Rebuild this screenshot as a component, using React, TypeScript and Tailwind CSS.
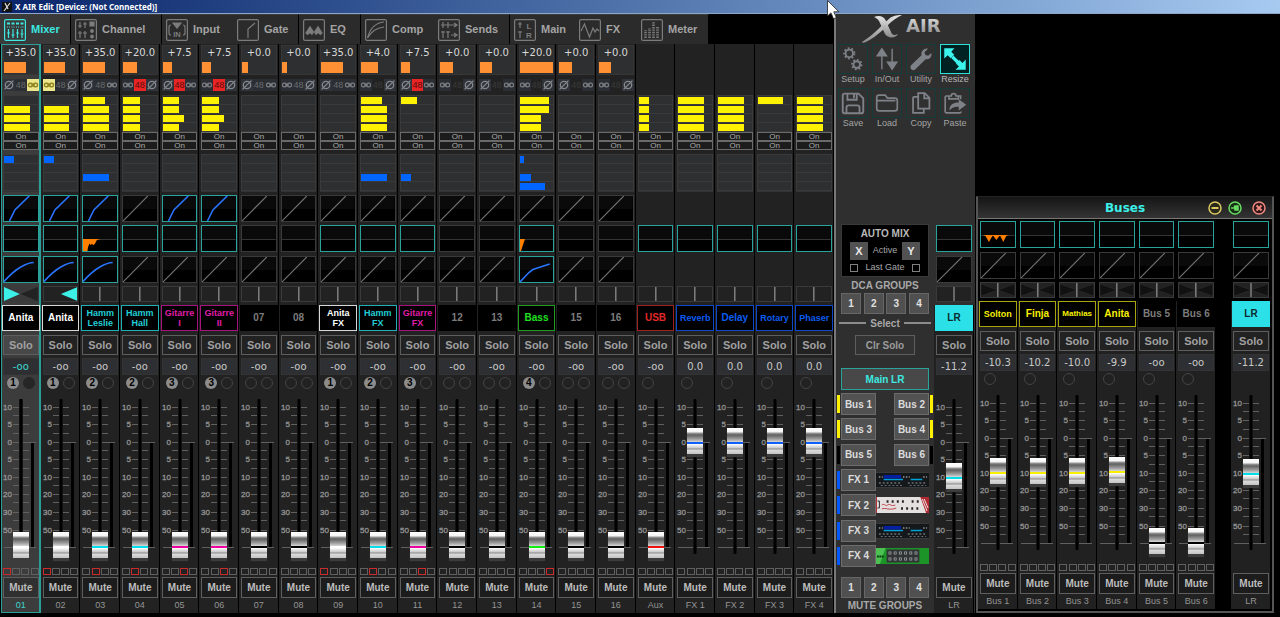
import type { ReactNode } from "react";

/* ---------- data ---------- */

type Pan = "none" | "center" | "left" | "right" | "bowtie";
type Curve = "off" | "on" | "alt";

interface Channel {
  label: string;
  name: string;
  color: keyof typeof nameStyles;
  cap: keyof typeof capStyles;
  small?: boolean;
  tiny?: boolean;
  selected?: boolean;
  gain?: string;
  gainBar?: number;
  phantom?: "red" | "gray" | "dim";
  linked?: boolean;
  flipped?: boolean;
  sends?: number[];
  fx?: number[];
  gate?: Curve;
  eq?: boolean;
  eqShape?: "low" | "edge" | "notches";
  comp?: Curve;
  pan: Pan;
  value: string;
  level: number;
  dca?: string;
  dcaSlots: number;
  muteGroup?: number;
  muteGroups?: boolean;
}

const nameStyles = {
  white: "border border-[#d8d8d8] bg-black text-white",
  cyan: "border border-[#20b0b4] bg-black text-[#22ced6]",
  magenta: "border border-[#a8127c] bg-black text-[#e01ca8]",
  gray: "bg-black text-[#7c7c7c]",
  green: "border border-[#1d9c1d] bg-black text-[#20e020]",
  red: "border border-[#a02020] bg-black text-[#e02828]",
  blue: "border border-[#0c48c8] bg-black text-[#0c5cf0]",
  yellow: "border border-[#a8a410] bg-black text-[#f8f000]",
  solid: "bg-[#2ce0e8] text-[#0c2c2e]",
};

const capStyles = {
  white: "text-white",
  cyan: "text-[#00e0ec]",
  magenta: "text-[#f000a0]",
  black: "text-black",
  green: "text-[#10f010]",
  red: "text-[#f01010]",
  blue: "text-[#1060ff]",
  yellow: "text-[#f8f000]",
};

const idle = { pan: "center" as Pan, value: "-oo", level: 0, dcaSlots: 2 };
const none4 = [0, 0, 0, 0];

const channels: Channel[] = [
  { ...idle, label: "01", name: "Anita", color: "white", cap: "white", selected: true, gain: "+35.0", gainBar: 64, phantom: "gray", linked: true, sends: [0, 76, 76, 76], fx: [30, 0, 0, 0], gate: "on", eq: true, comp: "on", pan: "left", dca: "1", muteGroup: 0 },
  { ...idle, label: "02", name: "Anita", color: "white", cap: "white", gain: "+35.0", gainBar: 64, phantom: "gray", linked: true, flipped: true, sends: [0, 76, 76, 76], fx: [30, 0, 0, 0], gate: "on", eq: true, comp: "on", pan: "right", dca: "1", muteGroup: 0 },
  { ...idle, label: "03", name: "Hamm\nLeslie", small: true, color: "cyan", cap: "cyan", gain: "+35.0", gainBar: 64, phantom: "gray", sends: [63, 76, 76, 76], fx: [0, 0, 76, 0], gate: "on", eq: true, eqShape: "low", comp: "on", dca: "2", muteGroup: 1 },
  { ...idle, label: "04", name: "Hamm\nHall", small: true, color: "cyan", cap: "cyan", gain: "+20.0", gainBar: 43, phantom: "red", flipped: true, sends: [50, 50, 50, 50], fx: none4, gate: "off", eq: true, comp: "off", dca: "2", muteGroup: 1 },
  { ...idle, label: "05", name: "Gitarre\nI", small: true, color: "magenta", cap: "magenta", gain: "+7.5", gainBar: 27, phantom: "red", sends: [50, 50, 63, 50], fx: none4, gate: "on", eq: true, comp: "off", dca: "3", muteGroup: 2 },
  { ...idle, label: "06", name: "Gitarre\nII", small: true, color: "magenta", cap: "magenta", gain: "+7.5", gainBar: 27, phantom: "red", flipped: true, sends: [50, 50, 63, 50], fx: none4, gate: "on", eq: true, comp: "off", dca: "3", muteGroup: 2 },
  { ...idle, label: "07", name: "07", color: "gray", cap: "black", gain: "+0.0", gainBar: 17, phantom: "gray", sends: none4, fx: none4, gate: "off", comp: "off" },
  { ...idle, label: "08", name: "08", color: "gray", cap: "black", gain: "+0.0", gainBar: 17, phantom: "gray", flipped: true, sends: none4, fx: none4, gate: "off", comp: "off" },
  { ...idle, label: "09", name: "Anita\nFX", small: true, color: "white", cap: "white", gain: "+35.0", gainBar: 64, phantom: "gray", sends: none4, fx: none4, gate: "off", eq: true, comp: "off", dca: "1", muteGroup: 0 },
  { ...idle, label: "10", name: "Hamm\nFX", small: true, color: "cyan", cap: "cyan", gain: "+4.0", gainBar: 50, phantom: "dim", flipped: true, sends: [63, 76, 76, 76], fx: [0, 0, 76, 0], gate: "off", eq: true, comp: "off", dca: "2", muteGroup: 1 },
  { ...idle, label: "11", name: "Gitarre\nFX", small: true, color: "magenta", cap: "magenta", gain: "+7.5", gainBar: 27, phantom: "red", sends: [50, 0, 0, 0], fx: [0, 0, 31, 0], gate: "off", eq: true, comp: "off", dca: "3", muteGroup: 2 },
  { ...idle, label: "12", name: "12", color: "gray", cap: "black", gain: "+0.0", gainBar: 37, phantom: "dim", flipped: true, sends: none4, fx: none4, gate: "off", comp: "off" },
  { ...idle, label: "13", name: "13", color: "gray", cap: "black", gain: "+0.0", gainBar: 37, phantom: "dim", sends: none4, fx: none4, gate: "off", comp: "off" },
  { ...idle, label: "14", name: "Bass", color: "green", cap: "green", gain: "+20.0", gainBar: 100, phantom: "dim", flipped: true, sends: [88, 88, 63, 63], fx: [13, 0, 35, 75], gate: "off", eq: true, eqShape: "edge", comp: "alt", dca: "4", muteGroup: 3 },
  { ...idle, label: "15", name: "15", color: "gray", cap: "black", gain: "+0.0", gainBar: 37, phantom: "dim", sends: none4, fx: none4, gate: "off", comp: "off" },
  { ...idle, label: "16", name: "16", color: "gray", cap: "black", gain: "+0.0", gainBar: 37, phantom: "dim", flipped: true, sends: none4, fx: none4, gate: "off", comp: "off" },
  { ...idle, label: "Aux", name: "USB", color: "red", cap: "red", sends: [32, 32, 32, 32], fx: none4, eq: true, dcaSlots: 1 },
  { ...idle, label: "FX 1", name: "Reverb", small: true, color: "blue", cap: "blue", sends: [76, 76, 76, 76], fx: none4, eq: true, value: "0.0", level: 74, dcaSlots: 1 },
  { ...idle, label: "FX 2", name: "Delay", color: "blue", cap: "blue", sends: [76, 76, 76, 76], fx: none4, eq: true, value: "0.0", level: 74, dcaSlots: 1 },
  { ...idle, label: "FX 3", name: "Rotary", small: true, color: "blue", cap: "blue", sends: [76, 0, 0, 0], fx: none4, eq: true, value: "0.0", level: 74, dcaSlots: 1 },
  { ...idle, label: "FX 4", name: "Phaser", small: true, color: "blue", cap: "blue", sends: [76, 76, 76, 76], fx: none4, eq: true, value: "0.0", level: 74, dcaSlots: 1 },
];

const busBase = { pan: "bowtie" as Pan, comp: "off" as Curve, eq: true, dcaSlots: 1 };

const buses: Channel[] = [
  { ...busBase, label: "Bus 1", name: "Solton", small: true, color: "yellow", cap: "yellow", eqShape: "notches", value: "-10.3", level: 50 },
  { ...busBase, label: "Bus 2", name: "Finja", color: "yellow", cap: "yellow", value: "-10.2", level: 50 },
  { ...busBase, label: "Bus 3", name: "Mathias", tiny: true, color: "yellow", cap: "yellow", value: "-10.0", level: 50 },
  { ...busBase, label: "Bus 4", name: "Anita", color: "yellow", cap: "yellow", value: "-9.9", level: 51 },
  { ...busBase, label: "Bus 5", name: "Bus 5", color: "gray", cap: "black", value: "-oo", level: 0 },
  { ...busBase, label: "Bus 6", name: "Bus 6", color: "gray", cap: "black", value: "-oo", level: 0 },
];

const mainLR: Channel = { label: "LR", name: "LR", color: "solid", cap: "cyan", eq: true, comp: "off", pan: "center", value: "-11.2", level: 49, dcaSlots: 0, muteGroups: false };

/* ---------- strip parts ---------- */

function BarStack({ values, tone, label }: { values: number[]; tone: "yellow" | "blue"; label: string }) {
  return (
    <div aria-label={label} role="group" className="border-t border-[#3a3a3a] bg-[#2d2f31]">
      {values.map((v, i) => (
        <div key={i} className="h-[9px] border-x border-b border-[#3a3a3a] pt-px">
          <div className={tone === "yellow" ? "h-[7px] bg-[#fff200]" : "h-[7px] bg-[#0066ff]"} style={{ width: `${v}%` }} />
        </div>
      ))}
    </div>
  );
}

function OnButton() {
  return (
    <button className="flex h-[9px] w-full items-center justify-center border border-[#6a6a6a] bg-[#1c1c1c] text-[8px] leading-[8px] text-[#acacac]">
      On
    </button>
  );
}

function PhaseIcon() {
  return (
    <svg viewBox="0 0 12 12" className="size-3" fill="none" stroke="#868a8e" strokeWidth="1.3">
      <circle cx="6" cy="6" r="3.7" />
      <path d="M1.6 10.4 10.4 1.6" />
    </svg>
  );
}

function LinkIcon({ on }: { on?: boolean }) {
  return (
    <svg viewBox="0 0 12 12" className="size-3" fill="none" stroke={on ? "#8f8420" : "#7c8084"} strokeWidth={on ? 1.4 : 1.2}>
      <rect x="1.5" y="4.2" width="4" height="3.6" rx="1.6" />
      <rect x="6.5" y="4.2" width="4" height="3.6" rx="1.6" />
      <path d="M4 6h4" />
    </svg>
  );
}

const phantomStyles = {
  red: "bg-[#e82424] text-[#5c0c0c]",
  gray: "bg-[#2b2e32] text-[#686c70]",
  dim: "text-[#3a3a3a]",
};

function InputFlags({ ch }: { ch: Channel }) {
  return (
    <div className={`flex h-[13px] items-center justify-between ${ch.flipped ? "flex-row-reverse" : ""}`}>
      <button aria-label="Polarity" className="flex h-3 w-3 items-center justify-center bg-[#30343a]">
        <PhaseIcon />
      </button>
      <button className={`h-3 w-3 text-center text-[9px] leading-3 ${phantomStyles[ch.phantom ?? "dim"]}`}>48</button>
      <button aria-label="Link" className={`flex h-3 w-3 items-center justify-center ${ch.linked ? "bg-[#ece68c]" : "bg-[#2b2e34]"}`}>
        <LinkIcon on={ch.linked} />
      </button>
    </div>
  );
}

function GraphBox({ active, children }: { active?: boolean; children: ReactNode }) {
  return (
    <div className={`h-[27px] border bg-black ${active ? "border-[#2ba39d]" : "border-[#3a3a3a]"}`}>
      <svg viewBox="0 0 34 25" preserveAspectRatio="none" className="block h-full w-full" fill="none">
        <rect width="34" height="13" fill="#0a0a0a" />
        {children}
      </svg>
    </div>
  );
}

function DynamicsBox({ kind, curve }: { kind: "gate" | "comp"; curve: Curve }) {
  const diagonal = <path d="M0 25 25 0" stroke="#747474" strokeWidth="1.1" />;
  const paths = {
    gate: "M5.5 25 11 14 25.500 0",
    comp: "M0 24.500Q9 14.500 17 10T30 5.500",
  };
  return (
    <GraphBox active={curve !== "off"}>
      {curve === "off" ? diagonal : (
        <path d={curve === "alt" ? "M0 25 9 15.500 13 12.500 30 7" : paths[kind]} stroke="#2a74ff" strokeWidth="1.6" />
      )}
    </GraphBox>
  );
}

function EqBox({ active, shape }: { active?: boolean; shape?: Channel["eqShape"] }) {
  return (
    <GraphBox active={active}>
      <path d="M0 13.500H34" stroke="#343434" />
      {shape === "low" && <path d="M0 13h18l-4 1-2 4-1.500 1-1.500-1-1.500 1-1-1.500-1.500 4-.5 3.500H0Z" fill="#ff7f00" />}
      {shape === "edge" && <path d="M0 13h5L1 25H0Z" fill="#ff7f00" />}
      {shape === "notches" && <path d="M2 13h26l-2.500 1-3 6-3-6h-1l-3 4-3-4h-1l-3.500 6-3.500-6Z" fill="#ff7f00" />}
    </GraphBox>
  );
}

function PanBox({ pan }: { pan: Pan }) {
  return (
    <div className="h-4 border border-[#3a3a3a] bg-[#222]">
      <svg viewBox="0 0 34 14" preserveAspectRatio="none" className="block h-full w-full">
        {pan === "bowtie" && <path d="M0 1 17 7 0 13ZM34 1 17 7 34 13Z" fill="#111" stroke="#333" strokeWidth=".5" />}
        {(pan === "center" || pan === "bowtie") && <path d="M17 0V14" stroke="#969696" strokeWidth="1.2" />}
        {pan === "left" && (
          <>
            <rect width="34" height="14" fill="#3a3a3a" />
            <path d="M34 0V14L17 7Z" fill="#222" />
            <path d="M0 0 16 7 0 14Z" fill="#3cf0e8" />
          </>
        )}
        {pan === "right" && <path d="M34 0V14L17 7Z" fill="#3cf0e8" />}
      </svg>
    </div>
  );
}

const ticks: [number, string][] = [
  [18, "10"], [26, ""], [35, "5"], [44, ""], [53, "0"], [61, ""], [70, "5"], [79, ""], [88, "10"],
  [96, ""], [105, "20"], [113, ""], [123, "30"], [131, ""], [141, "50"], [149, ""],
];

function Fader({ ch }: { ch: Channel }) {
  return (
    <div className="-mx-px grid h-[179px] justify-items-center overflow-hidden">
      <svg viewBox="0 0 38 179" className="col-start-1 row-start-1 h-[179px] w-[38px]">
        <rect x="29" y="53" width="3" height="105" fill="#000" />
        {ticks.map(([y, text]) => (
          <g key={y}>
            <path d={`M11 ${y + 0.5}h7M21 ${y + 0.5}h6`} stroke="#606060" />
            {text && (
              <text x="10" y={y + 3} textAnchor="end" fontSize="8" fill="#949494" stroke="#949494" strokeWidth=".3">
                {text}
              </text>
            )}
          </g>
        ))}
        <path d="M27 53.500H34M2 158.500H34" stroke="#606060" />
        <rect x="17" y="10" width="4" height="155" fill="#1f2423" />
        <rect x="17.500" y="10" width="3" height="155" rx="1" fill="#000" />
      </svg>
      <input
        type="range"
        aria-label={`${ch.label} level`}
        defaultValue={ch.level}
        className={`col-start-1 row-start-1 mt-[3px] h-[166px] w-4 appearance-none bg-transparent [direction:rtl] [writing-mode:vertical-lr] [&::-webkit-slider-runnable-track]:w-4 [&::-webkit-slider-thumb]:h-[26px] [&::-webkit-slider-thumb]:w-4 [&::-webkit-slider-thumb]:appearance-none [&::-webkit-slider-thumb]:bg-[linear-gradient(180deg,#fff_0,#f4f4f4_4px,#9a9a9a_5px,#606060_7px,#9c9c9c_11px,#d8d8d8_14px,currentColor_14px,currentColor_16px,#fff_16px,#c8c8c8_20px,#8a8a8a_21px,#dcdcdc_22px,#c4c4c4_26px)] [&::-webkit-slider-thumb]:shadow-[0_3px_1px_#3c3c3c] ${capStyles[ch.cap]}`}
      />
    </div>
  );
}

function DcaDots({ ch }: { ch: Channel }) {
  return (
    <div className="flex h-3 gap-1 pl-1">
      {Array.from({ length: ch.dcaSlots }, (_, i) =>
        i === 0 && ch.dca ? (
          <span key={i} className="size-3 rounded-full bg-[#8c8c8c] text-center text-[10px] leading-3 font-bold text-black">
            {ch.dca}
          </span>
        ) : (
          <span key={i} className={`size-3 rounded-full border ${ch.selected ? "border-[#262626] bg-[#262626]" : "border-[#444]"}`} />
        ),
      )}
    </div>
  );
}

function StripFoot({ ch }: { ch: Channel }) {
  const size = ch.tiny ? "text-[8px]" : ch.small ? "text-[9px]" : "text-[10px]";
  return (
    <>
      <button className={`-mx-px flex h-[26px] items-center justify-center text-center leading-[10px] font-bold whitespace-pre ${size} ${nameStyles[ch.color]}`}>
        {ch.name}
      </button>
      <button className={`mt-1 h-5 w-full border border-[#5e5e5e] text-[11px] leading-[18px] font-bold text-[#a0a0a0] ${ch.selected ? "bg-[#484848]" : "bg-[#222]"}`}>
        Solo
      </button>
      <output className={`mt-[3px] block h-[17px] border border-[#333] bg-[#2d2f32] text-center font-['DejaVu_Sans',sans-serif] text-[10px] leading-[15px] ${ch.selected ? "text-[#3cd8d0]" : "text-[#c8c8c8]"}`}>
        {ch.value}
      </output>
      <div className="mt-0.5 h-3">
        <DcaDots ch={ch} />
      </div>
      <Fader ch={ch} />
      <div className="flex h-[7px] justify-between">
        {ch.muteGroups !== false &&
          [0, 1, 2, 3].map((i) => (
            <span key={i} className={`h-[7px] w-2 border ${ch.muteGroup === i ? "border-[#c82c2c]" : "border-[#606060]"}`} />
          ))}
      </div>
      <button className={`mt-0.5 h-[21px] w-full border border-[#5e5e5e] text-[10px] leading-[19px] font-bold text-[#bcbcbc] ${ch.selected ? "bg-[#303030]" : "bg-[#1c1c1c]"}`}>
        Mute
      </button>
      <div className={`h-[15px] text-center text-[9px] leading-[15px] whitespace-nowrap ${ch.selected ? "text-[#3cd8d0]" : "text-[#949494]"}`}>
        {ch.label}
      </div>
    </>
  );
}

function ChannelStrip({ ch }: { ch: Channel }) {
  const frame = ch.selected
    ? "bg-[#3c3c3c] shadow-[inset_0_0_0_1px_#2a9d97] border-r border-[#2a9d97]"
    : "bg-[#222] border-r border-black";
  return (
    <section aria-label={ch.label} className={`min-w-0 pt-px pr-px pl-0.5 ${frame}`}>
      <div className="h-[30px]">
        {ch.gain && (
          <div className="h-full border border-[#363636] bg-[#2d2f31]">
            <div className="h-4 text-center font-['DejaVu_Sans',sans-serif] text-[10px] leading-[14px] text-[#d8d8d8]">{ch.gain}</div>
            <div className="h-[11px] bg-[#ff9034]" style={{ width: `${ch.gainBar}%` }} />
          </div>
        )}
      </div>
      <div className="mt-[3px] h-[13px]">{ch.gain && <InputFlags ch={ch} />}</div>
      <div className="mt-1">
        <BarStack values={ch.sends ?? none4} tone="yellow" label="Bus sends" />
      </div>
      <OnButton />
      <OnButton />
      <div className="mt-1 border-b border-[#333]">
        <BarStack values={ch.fx ?? none4} tone="blue" label="FX sends" />
      </div>
      <div className="mt-[3px] h-[27px]">{ch.gate && <DynamicsBox kind="gate" curve={ch.gate} />}</div>
      <div className="mt-[3px]">
        <EqBox active={ch.eq} shape={ch.eqShape} />
      </div>
      <div className="mt-1 h-[27px]">{ch.comp && <DynamicsBox kind="comp" curve={ch.comp} />}</div>
      <div className="my-[3px]">
        <PanBox pan={ch.pan} />
      </div>
      <div className="flex flex-col">
        <StripFoot ch={ch} />
      </div>
    </section>
  );
}

function OutputStrip({ ch }: { ch: Channel }) {
  return (
    <section aria-label={ch.label} className="min-w-0">
      <div className="flex flex-col pr-0.5 pb-[3px] pl-0.5">
        <EqBox active shape={ch.eqShape} />
        <div className="mt-1 mb-[3px]">
          <DynamicsBox kind="comp" curve="off" />
        </div>
        <PanBox pan={ch.pan} />
      </div>
      <div className="flex flex-col border-r border-black bg-[#212121] pr-px pl-0.5">
        <StripFoot ch={ch} />
      </div>
    </section>
  );
}

/* ---------- top bar ---------- */

function TabIcon({ children }: { children: ReactNode }) {
  return (
    <svg viewBox="0 0 22 22" className="size-[22px] shrink-0" fill="none" stroke="currentColor" strokeWidth="1.2">
      <rect x=".6" y=".6" width="20.800" height="20.800" rx="1.5" />
      {children}
    </svg>
  );
}

const tabs: { label: string; width: string; icon: ReactNode; active?: boolean }[] = [
  {
    label: "Mixer", width: "w-[71px] border-r border-black", active: true,
    icon: (
      <>
        <path d="M3 4.500h3M7.500 4.500h3M12 4.500h3M16.500 4.500h3" strokeWidth="2" />
        <path d="M3 8h3M7.500 8h3M12 8h3M16.500 8h3" strokeDasharray="1 1" />
        <path d="M4.500 10v9M9 10v9M13.500 10v9M18 10v9M3 14h3M7.500 16h3M12 14h3M16.500 15h3" />
      </>
    ),
  },
  {
    label: "Channel", width: "w-[91px] border-r border-black",
    icon: (
      <>
        <path d="M5 3v6M10 3v6M5 12v7M10 12v7M3 7h4M8 5h4M3 14h4M8 14h4" />
        <path d="M15 3h4v4h-4z" fill="currentColor" />
        <circle cx="17" cy="12" r="1.3" fill="currentColor" /><circle cx="17" cy="17.500" r="1.300" fill="currentColor" />
      </>
    ),
  },
  {
    label: "Input", width: "w-[71px]",
    icon: (
      <>
        <path d="M7 4h8l-4 5z" fill="currentColor" />
        <path d="M5 6q-2 0-2 2v6q0 2 2 2M17 6q2 0 2 2v6q0 2-2 2" />
        <text x="11" y="18" textAnchor="middle" fontSize="7.500" fill="currentColor" stroke="none">IN</text>
      </>
    ),
  },
  { label: "Gate", width: "w-[66px] border-r border-black", icon: <path d="M11 19v-9l7-6" /> },
  {
    label: "EQ", width: "w-[62px] border-r border-black",
    icon: <path d="M2.500 14 7 7l4 6 4-6 4.500 7-2 2-2.500-2-2 2-2-3-2 3-2-2-2.500 2Z" fill="currentColor" strokeWidth=".4" />,
  },
  { label: "Comp", width: "w-[73px]", icon: <path d="M2.500 19C5 9 10 4 19 3M2.500 19C7 12 11 9 19 8" /> },
  {
    label: "Sends", width: "w-[76px] border-r border-black",
    icon: <path d="M5 3v6M10 3v6M3 6h15M16 4l3 2-3 2M5 12v7M10 12v7M3 13h4M8 13h4M13 16h5M16 14l3 2-3 2" />,
  },
  {
    label: "Main", width: "w-[65px]",
    icon: (
      <>
        <path d="M6 3v6M6 12v7M4 5h4M4 13h4" />
        <text x="15" y="9.500" textAnchor="middle" fontSize="8" fill="currentColor" stroke="none">L</text>
        <text x="15" y="19" textAnchor="middle" fontSize="8" fill="currentColor" stroke="none">R</text>
      </>
    ),
  },
  { label: "FX", width: "w-[62px]", icon: <path d="M2 12 5.500 5l5 13 3.500-9 2 4 2-3 2 2" /> },
  {
    label: "Meter", width: "w-[72px] border-r border-black",
    icon: <path d="M4.500 19V11M8.500 19V9M12.500 19V3M16.500 19V7" strokeWidth="2.600" strokeDasharray="1.400 1" />,
  },
];

function TitleBar() {
  return (
    <header className="flex h-[14px] items-center gap-[3px] border-b border-[#8ea6c8] bg-linear-to-r from-[#0a246a] to-[#a6caf0] pl-0.5">
      <svg viewBox="0 0 10 10" className="size-[10px]">
        <rect width="10" height="10" fill="#111" />
        <path d="M2 9 8 1M3 1l3 6" stroke="#e0e0e0" strokeWidth="1.2" />
      </svg>
      <h1 className="font-['Noto_Sans',sans-serif] text-[8px] leading-3 font-bold text-white">X AIR Edit [Device: (Not Connected)]</h1>
    </header>
  );
}

function Tabs() {
  return (
    <nav className="flex h-[30px]">
      {tabs.map((t) => (
        <button
          key={t.label}
          className={`flex items-center gap-[5px] border-t border-t-[#3c3c3c] pl-1 text-[11px] font-bold ${t.width} ${t.active ? "bg-[#3a3a3a] text-[#3ce8e0]" : "bg-[#2b2b2b] text-[#a4a4a4] [&>svg]:text-[#7c7c7c]"}`}
        >
          <TabIcon>{t.icon}</TabIcon>
          {t.label}
        </button>
      ))}
    </nav>
  );
}

/* ---------- side panel ---------- */

function Logo() {
  return (
    <svg viewBox="0 0 139 30" className="h-[30px] w-full" aria-label="X AIR">
      <defs>
        <linearGradient id="metal" x1="0" y1="0" x2="0" y2="1">
          <stop offset="0" stopColor="#e4e4e4" />
          <stop offset="1" stopColor="#8a8a8a" />
        </linearGradient>
      </defs>
      <path d="M26 28C36 22 44 13 54 4c3-2 6-3 12-3-6 3-10 6-15 11C42 21 34 26 30 28c-2 1-4 1-4 0Z" fill="url(#metal)" />
      <path d="M38 3c5-2 10-1 12 4l5 11c1 3 3 4 7 2-2 4-10 5-13 0l-6-13c-1-2-3-3-5-4Z" fill="url(#metal)" />
      <text x="70" y="18" fontFamily="'DejaVu Sans', sans-serif" fontSize="18" fontWeight="bold" fill="url(#metal)">AIR</text>
    </svg>
  );
}

function Gear({ cx, cy, r }: { cx: number; cy: number; r: number }) {
  return (
    <g fill="none" stroke="currentColor">
      <circle cx={cx} cy={cy} r={r} strokeWidth="2" />
      <circle cx={cx} cy={cy} r={r + 1.6} strokeWidth="1.8" strokeDasharray="1.900 2.100" />
    </g>
  );
}

const tools: { label: string; icon: ReactNode; active?: boolean }[] = [
  { label: "Setup", icon: <><Gear cx={11} cy={9} r={4} /><Gear cx={19} cy={21} r={3.6} /></> },
  { label: "In/Out", icon: <path d="M9.500 26V10M20.500 4v16M4.500 11.500 9.500 4l5 7.500ZM15.500 18.500h10l-5 7.500Z" fill="currentColor" stroke="currentColor" strokeWidth="1.500" /> },
  {
    label: "Utility",
    icon: (
      <path d="M26 8.500c1 4-2 7.500-6 6.800L9 26c-1.500 1.500-3.500 1.200-4.500 0s-1.300-3 .2-4.500L15.500 11c-.7-4.500 3-8 7-7l-3.800 3.800 1 3 3 .8z" fill="currentColor" />
    ),
  },
  { label: "Resize", active: true, icon: <path d="M3.500 3.500h11L11 7.200l3.200 3.200-3.800 3.800L7.200 11l-3.700 3.500ZM26.500 26.500h-11l3.700-3.500-3.200-3.200 3.800-3.800 3.200 3.200 3.500-3.700ZM13.500 11.500l5.500 5.500-2.500 2.500-5.500-5.500Z" fill="currentColor" /> },
  {
    label: "Save",
    icon: <path d="M4 7q0-2 2-2h15l5 5v14q0 2-2 2H6q-2 0-2-2zM9 5v6.500h10V5M16 6v4M8 26v-6q0-2.500 2.500-2.500h9Q22 17.500 22 20v6" fill="none" stroke="currentColor" strokeWidth="2" />,
  },
  {
    label: "Load",
    icon: <path d="M4 9q0-2.500 2.500-2.500H13l2.500 3.200h8Q26 9.700 26 12.200V21q0 2.500-2.500 2.500h-17Q4 23.500 4 21zM4 12.500h20" fill="none" stroke="currentColor" strokeWidth="1.800" />,
  },
  {
    label: "Copy",
    icon: <path d="M12 4.500h7l5 5v11.500H12zM18.500 5v5H24M12 8.500H7.500q-1 0-1 1v16H18V21" fill="none" stroke="currentColor" strokeWidth="1.900" />,
  },
  {
    label: "Paste",
    icon: (
      <>
        <path d="M9 7.500H6q-1.500 0-1.500 1.500v15q0 1.500 1.500 1.500h14q1.500 0 1.500-1.500M17 7.500h4V11M8.500 10.500v-3h2.500a2.500 2.500 0 0 1 5 0h2.500v3z" fill="none" stroke="currentColor" strokeWidth="1.800" />
        <path d="M9 23c0-6 4-8.500 10-8.500V11l8 6-8 6v-4c-4 0-7 .5-10 4Z" fill="currentColor" />
      </>
    ),
  },
];

function ToolGrid() {
  return (
    <div className="ml-0.5 grid grid-cols-[repeat(4,30px)] gap-x-1 gap-y-1">
      {tools.map((t) => (
        <button key={t.label} className="flex flex-col items-center">
          <svg
            viewBox="0 0 30 30"
            className={`size-[30px] border ${t.active ? "border-[#2ce0d8] bg-[#002222] text-[#3cf4ec]" : "border-[#143c3a] bg-[#303030] text-[#7e8288]"}`}
          >
            {t.icon}
          </svg>
          <span className={`h-[10px] text-[9px] leading-[10px] ${t.active ? "text-[#b8b8b8]" : "text-[#a4a4a4]"}`}>{t.label}</span>
        </button>
      ))}
    </div>
  );
}

function AutoMix() {
  return (
    <fieldset className="flex h-[53px] flex-col border border-[#3a3a3a] bg-black text-[#a8a8a8]">
      <div className="h-[17px] text-center text-[10px] leading-[17px] font-bold text-[#b8b8b8]">AUTO MIX</div>
      <div className="flex h-[18px] items-center justify-between px-2 text-[9px]">
        <button className="size-[18px] bg-[#525252] text-[11px] font-bold text-[#e8e8e8]">X</button>
        Active
        <button className="size-[18px] bg-[#525252] text-[11px] font-bold text-[#e8e8e8]">Y</button>
      </div>
      <div className="flex h-4 items-center justify-between px-2 text-[9px]">
        <input type="checkbox" aria-label="Last Gate X" className="size-2 appearance-none border border-[#808080]" />
        Last Gate
        <input type="checkbox" aria-label="Last Gate Y" className="size-2 appearance-none border border-[#808080]" />
      </div>
    </fieldset>
  );
}

function GroupButtons() {
  return (
    <div className="flex h-[21px] justify-between">
      {["1", "2", "3", "4"].map((n) => (
        <button key={n} className="w-5 border border-[#666] bg-[#505050] text-[10px] font-bold text-[#e0e0e0]">
          {n}
        </button>
      ))}
    </div>
  );
}

function DelayRack() {
  return (
    <svg viewBox="0 0 55 16" className="block h-4 w-full" preserveAspectRatio="none">
      <rect width="55" height="16" fill="#15181b" />
      <path d="M0 .5H55M0 15.500H55" stroke="#3a3a3a" />
      <path d="M8 7.500H28M36 7.500H48" stroke="#00a0d8" strokeWidth="1.500" />
      <rect x="8" y="3" width="18" height="3.500" fill="#0420a0" />
      <path d="M3 5h4M28 5h7M49 5h4" stroke="#777" strokeDasharray="1.500 1.500" strokeWidth="2" />
      <path d="M3 11H27M33 11H52" stroke="#6c7074" strokeDasharray="2 2" strokeWidth="1.500" />
      <path d="M5 13.500H27M35 13.500H52" stroke="#6c7074" strokeDasharray="2 2" />
    </svg>
  );
}

function RedRack() {
  return (
    <svg viewBox="0 0 55 16" className="block h-4 w-full" preserveAspectRatio="none">
      <rect width="55" height="16" fill="#e4e0e0" />
      <path d="M46 0h9v16h-3ZM0 0h1v16H0z" fill="#b02830" />
      <path d="M48 2l5 12M50 2l4 9" stroke="#f0e8e8" />
      <path d="M1.500 4h2v7h-2" fill="none" stroke="#222" />
      <path d="M11 4.500H29M37 4.500H45M26 11.500H45" stroke="#2a2222" strokeDasharray="2 3.300" strokeWidth="2.500" />
      <path d="M6 8c3-2 4 2 6 0s4 2 8 0M6 12c3-2 8 2 15-1" stroke="#c04048" fill="none" />
    </svg>
  );
}

function GreenRack() {
  return (
    <svg viewBox="0 0 55 16" className="block h-4 w-full" preserveAspectRatio="none">
      <rect width="55" height="16" fill="#1c9428" />
      <path d="M0 0 10 0 4 16H0Z" fill="#4cc050" />
      <path d="M1 8.500h7" stroke="#0c4010" strokeWidth="2" strokeDasharray="2 .5" />
      <rect x="11" y="1.500" width="34" height="13" fill="#303434" />
      <path d="M13 5H44M13 11H44" stroke="#989c9c" strokeDasharray="3 2.400" strokeWidth="3" />
      <path d="M14 5H44M14 11H44" stroke="#181818" strokeDasharray="1 4.400" strokeWidth="1.500" />
    </svg>
  );
}

const busRows = [
  { left: "Bus 1", right: "Bus 2", on: true },
  { left: "Bus 3", right: "Bus 4", on: true },
  { left: "Bus 5", right: "Bus 6", on: false },
];

const fxRows = [
  { label: "FX 1", rack: <DelayRack /> },
  { label: "FX 2", rack: <RedRack /> },
  { label: "FX 3", rack: <DelayRack /> },
  { label: "FX 4", rack: <GreenRack /> },
];

const layerButton = "h-[22px] w-[35px] shrink-0 border border-[#6c6c6c] bg-[#525252] text-[10px] font-bold text-[#dcdcdc]";

function LayerButtons() {
  return (
    <div className="-mx-1 flex h-[174px] flex-col justify-between">
      {busRows.map((r) => (
        <div key={r.left} className="flex items-center">
          <span className={`mr-px h-[18px] w-[3px] ${r.on ? "bg-[#fff200]" : "bg-black"}`} />
          <button className={layerButton}>{r.left}</button>
          <span className="flex-1" />
          <button className={layerButton}>{r.right}</button>
          <span className={`ml-px h-[18px] w-[3px] ${r.on ? "bg-[#fff200]" : "bg-black"}`} />
        </div>
      ))}
      {fxRows.map((r) => (
        <div key={r.label} className="flex items-center pr-1">
          <span className="mr-px h-[18px] w-[3px] bg-[#0058ff]" />
          <button className={layerButton}>{r.label}</button>
          <div className="min-w-0 flex-1">{r.rack}</div>
        </div>
      ))}
    </div>
  );
}

function SidePanel() {
  return (
    <aside className="flex w-[141px] shrink-0 flex-col border-l-2 border-[#787878] bg-[#2f2f2f]">
      <Logo />
      <ToolGrid />
      <div className="mt-auto flex">
        <div className="flex min-w-0 flex-1 flex-col px-[5px]">
          <AutoMix />
          <div className="-mx-1 h-4 text-center text-[10px] leading-[18px] font-bold text-[#a8a8a8]">DCA GROUPS</div>
          <GroupButtons />
          <div className="-mx-0.5 flex h-[18px] items-center gap-1 text-[10px] font-bold text-[#a8a8a8]">
            <span className="h-0.5 flex-1 bg-[#8c8c8c]" />
            Select
            <span className="h-0.5 flex-1 bg-[#8c8c8c]" />
          </div>
          <button className="mx-auto mt-[3px] h-5 w-[60px] border border-[#5e5e5e] bg-[#333] text-[10px] font-bold text-[#9c9c9c]">Clr Solo</button>
          <button className="mt-[13px] mb-[3px] h-[22px] border border-[#2ba39d] bg-[#484848] text-[10px] font-bold text-[#3ce8e0]">Main LR</button>
          <LayerButtons />
          <div className="mt-[10px]">
            <GroupButtons />
          </div>
          <div className="-mx-1 h-[15px] text-center text-[10px] leading-[15px] font-bold whitespace-nowrap text-[#a8a8a8]">MUTE GROUPS</div>
        </div>
        <div className="mr-px w-10 shrink-0 pt-px">
          <OutputStrip ch={mainLR} />
        </div>
      </div>
    </aside>
  );
}

/* ---------- buses window ---------- */

function BusesWindow() {
  return (
    <section aria-label="Buses" className="mr-[6px] ml-px border-2 border-t border-[#555] border-t-[#242424] bg-black">
      <div className="flex h-[22px] items-center border-b border-[#777] bg-linear-to-b from-[#161616] to-[#343434]">
        <span className="w-[76px]" />
        <h2 className="flex-1 text-center font-['DejaVu_Sans',sans-serif] text-[12px] font-bold text-[#3cf0e8]">Buses</h2>
        <div className="flex w-[76px] items-center gap-[6px] pl-3">
          <button aria-label="Minimize">
            <svg viewBox="0 0 14 14" className="size-[14px]" fill="#2a2818" stroke="#dcc860" strokeWidth="1.500">
              <circle cx="7" cy="7" r="6" />
              <path d="M3.500 7h7" strokeWidth="2" />
            </svg>
          </button>
          <button aria-label="Pin">
            <svg viewBox="0 0 14 14" className="size-[14px]" fill="#182a18" stroke="#68dc60" strokeWidth="1.500">
              <circle cx="7" cy="7" r="6" />
              <path d="M3 7h3M6.500 4.500 7 9.500M7.500 5h2.500v4H7.500z" fill="#68dc60" />
            </svg>
          </button>
          <button aria-label="Close" className="ml-1">
            <svg viewBox="0 0 14 14" className="size-[14px]" fill="#301818" stroke="#f08880" strokeWidth="1.500">
              <circle cx="7" cy="7" r="6" />
              <path d="m4.500 4.500 5 5M9.500 4.500l-5 5" strokeWidth="2" />
            </svg>
          </button>
        </div>
      </div>
      <div className="flex py-0.5 pr-px">
        <div className="grid flex-1 grid-cols-6">
          {buses.map((b) => <OutputStrip key={b.label} ch={b} />)}
        </div>
        <div className="ml-[15px] w-10">
          <OutputStrip ch={{ ...mainLR, pan: "bowtie" }} />
        </div>
      </div>
    </section>
  );
}

function Pointer() {
  return (
    <svg viewBox="0 0 13 20" className="pointer-events-none absolute top-0 left-[827px] h-5 w-[13px]">
      <path d="M.5.5v15.500L4 12.800l2.500 6 2.800-1.200-2.500-5.800h5z" fill="#fff" stroke="#222" strokeWidth=".8" />
    </svg>
  );
}

export default function App() {
  return (
    <div className="relative min-h-screen bg-black font-['Liberation_Sans',Arial,sans-serif]">
      <TitleBar />
      <div className="flex items-stretch">
        <main className="min-w-0 flex-1">
          <Tabs />
          <div className="grid grid-cols-[repeat(21,minmax(0,1fr))] pl-px">
            {channels.map((c) => <ChannelStrip key={c.label} ch={c} />)}
          </div>
        </main>
        <SidePanel />
        <div className="flex w-[305px] shrink-0 flex-col justify-end">
          <BusesWindow />
        </div>
      </div>
      <Pointer />
    </div>
  );
}
